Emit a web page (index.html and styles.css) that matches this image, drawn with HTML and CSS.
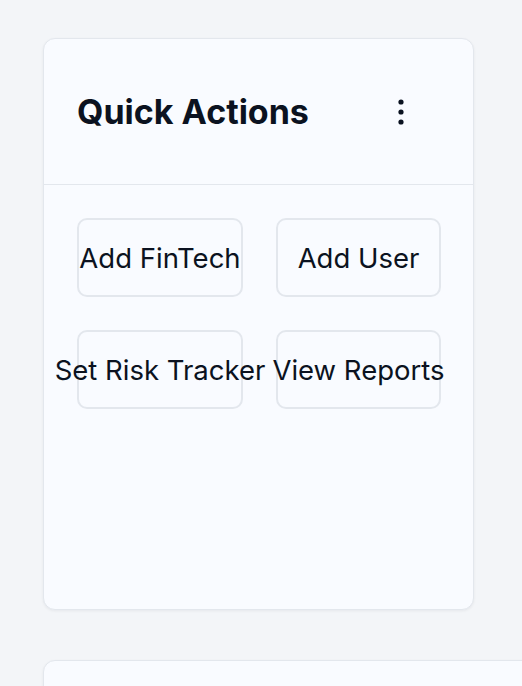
FILE: index.html
```html
<!DOCTYPE html>
<html>
<head>
<meta charset="utf-8">
<link rel="stylesheet" href="styles.css">
</head>
<body>
<div class="page">
  <section class="card">
    <header class="card-header">
      <h2 class="title">Quick Actions</h2>
      <button class="kebab" aria-label="More">
        <svg width="6" height="26" viewBox="0 0 6 26"><circle cx="3" cy="3" r="2.6" fill="#0b1220"/><circle cx="3" cy="13" r="2.6" fill="#0b1220"/><circle cx="3" cy="23" r="2.6" fill="#0b1220"/></svg>
      </button>
    </header>
    <div class="card-body">
      <div class="actions">
        <button class="action">Add FinTech</button>
        <button class="action">Add User</button>
        <button class="action">Set Risk Tracker</button>
        <button class="action">View Reports</button>
      </div>
    </div>
  </section>
  <section class="card card-next"></section>
</div>
</body>
</html>
```
FILE: styles.css
```css
* { box-sizing: border-box; }
html, body { margin: 0; padding: 0; }
body {
  background: #f3f5f8;
  font-family: Inter, "Noto Sans", sans-serif;
  color: #0b1220;
  overflow: hidden;
}
.page {
  padding: 38px 0 0 43px;
  display: flex;
  flex-direction: column;
  gap: 50px;
}
.card {
  width: 431px;
  height: 572px;
  background: #f9fbff;
  border: 1px solid #e3e7ed;
  border-radius: 12px;
  box-shadow: 0 1px 3px rgba(15, 23, 42, 0.06);
  display: flex;
  flex-direction: column;
  flex-shrink: 0;
}
.card-next { width: 520px; height: 200px; }
.card-header {
  height: 146px;
  border-bottom: 1px solid #e3e7ed;
  display: flex;
  align-items: center;
  justify-content: space-between;
  padding: 0 69px 0 33px;
}
.title {
  margin: 0;
  font-size: 34px;
  font-weight: 700;
  line-height: 1;
  padding-top: 0;
}
.kebab {
  border: 0;
  background: none;
  padding: 0;
  display: flex;
  cursor: pointer;
}
.card-body { padding: 33px 32px 0 33px; }
.actions {
  display: grid;
  grid-template-columns: 166px 165px;
  grid-auto-rows: 79px;
  column-gap: 33px;
  row-gap: 33px;
}
.action {
  background: #f9fbff;
  border: 2px solid #e3e7ed;
  border-radius: 10px;
  font-family: Inter, "Noto Sans", sans-serif;
  font-size: 27.5px;
  color: #0b1220;
  white-space: nowrap;
  padding: 0;
  display: flex;
  align-items: center;
  justify-content: center;
  overflow: visible;
}
```
